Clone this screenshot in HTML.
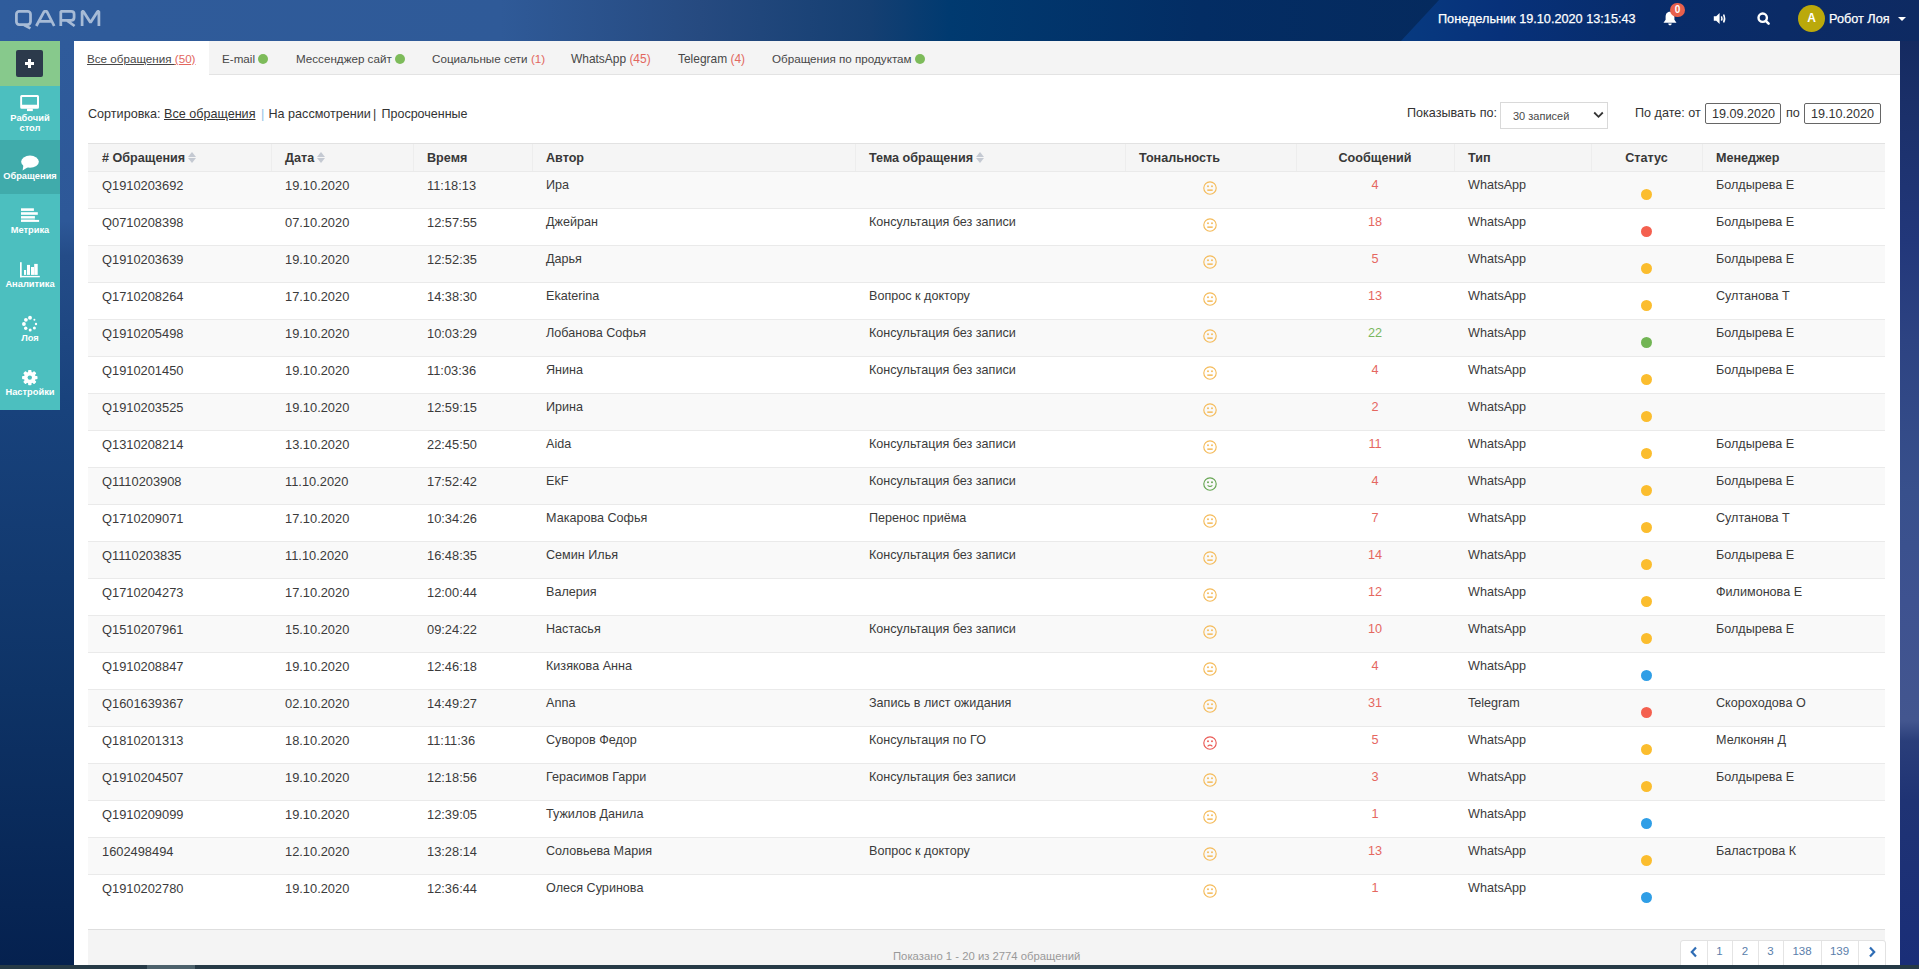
<!DOCTYPE html>
<html><head><meta charset="utf-8">
<style>
*{margin:0;padding:0;box-sizing:border-box}
html,body{width:1919px;height:969px;overflow:hidden}
body{position:relative;font-family:"Liberation Sans",sans-serif;color:#333;background:#0c2f66}
.hbg{position:absolute;left:0;top:0;width:1919px;height:41px;background:linear-gradient(90deg,#2f5c9c 0px,#2f5b9a 100px,#2f5a98 500px,#264a80 700px,#153f72 870px,#003a70 950px,#032d64 1200px,#052a5e 1440px,#072e6c 1600px,#0b2c66 1700px,#10295e 1919px)}
.hbg2{position:absolute;left:0;top:0;width:1919px;height:41px;clip-path:polygon(1401px 41px,1439px 0px,1919px 0px,1919px 41px);background:linear-gradient(90deg,#073a80 1400px,#07317a 1500px,#082c6a 1650px,#0e2a62 1919px)}
.lbg{position:absolute;left:0;top:41px;width:74px;height:924px;background:linear-gradient(180deg,#2f5b9b 0px,#2d5898 180px,#244c88 215px,#18427c 370px,#0e3366 650px,#05214f 924px)}
.rbg{position:absolute;left:1900px;top:41px;width:19px;height:924px;background:linear-gradient(180deg,#142a60 0px,#1a2f68 60px,#22377a 200px,#2d4382 300px,#38508c 450px,#3e5290 560px,#43568f 680px,#2a3e7a 700px,#1f3374 760px,#1a2e78 924px)}
.abs{position:absolute}
/* header */
.logo{position:absolute;left:15px;top:6px;font-size:22px;letter-spacing:5.2px;color:#a9bdd9;font-weight:400}
.hdate{position:absolute;left:1438px;top:12px;font-size:12.7px;color:#fff;white-space:nowrap;-webkit-text-stroke:0.25px #fff}
.hname{position:absolute;left:1829px;top:12px;font-size:12.7px;color:#fff;white-space:nowrap;-webkit-text-stroke:0.25px #fff}
.avatar{position:absolute;left:1798px;top:5px;width:27px;height:27px;border-radius:50%;background:#bba90b;color:#fff;font-size:12px;font-weight:700;text-align:center;line-height:27px}
.badge{position:absolute;left:1670px;top:3px;width:15px;height:14px;border-radius:7px;background:#e8604c;color:#fff;font-size:10px;font-weight:700;text-align:center;line-height:14px}
.caret{position:absolute;left:1898px;top:17px;width:0;height:0;border-left:4px solid transparent;border-right:4px solid transparent;border-top:4px solid #fff}
/* sidebar */
.side{position:absolute;left:0;top:41px;width:60px}
.sgreen{height:45px;background:#87c98c;position:relative}
.plus{position:absolute;left:16px;top:9px;width:27px;height:27px;background:#2c3a4b;border-radius:2px}
.plus:before{content:"";position:absolute;left:9px;top:12px;width:9px;height:3px;background:#fff}
.plus:after{content:"";position:absolute;left:12px;top:9px;width:3px;height:9px;background:#fff}
.si{height:54px;background:#4cbfbf;position:relative;color:#fff;text-align:center;font-weight:700;font-size:9.3px;letter-spacing:0;line-height:10px}
.si.act{background:#40abab}
.si svg{position:absolute;left:0;top:0}
.si .lab{position:absolute;left:0;width:60px;text-align:center}
/* panel */
.panel{position:absolute;left:74px;top:41px;width:1826px;height:924px;background:#fff}
.tabs{position:absolute;left:0;top:0;width:1826px;height:34px;background:#f4f4f4;border-bottom:1px solid #e3e3e3}
.tab{position:absolute;top:11px;font-size:11.65px;color:#474747;white-space:nowrap}
.tab.act{left:0;top:0;width:135px;height:34px;background:#fff}
.cnt{color:#e2675e}
.gd{display:inline-block;width:10px;height:10px;border-radius:50%;background:#7dbb5a;margin-left:3px;vertical-align:-1px}
.sortl{position:absolute;top:66px;font-size:12.6px;white-space:nowrap;color:#333}
.sortl u{text-decoration:underline}
.flt{position:absolute;top:65px;font-size:12.6px;white-space:nowrap;color:#333}
.sel{position:absolute;left:1426px;top:61px;width:108px;height:27px;border:1px solid #d9d9d9;border-radius:0;background:#fff}
.sel span{position:absolute;left:12px;top:7px;font-size:11px;color:#4a4a4a}
.dbox{position:absolute;top:62px;height:21px;border:1px solid #666;border-radius:2px;background:#fff;font-size:12.6px;color:#333;padding:3px 0 0 6px;white-space:nowrap}
/* table */
.tbl{position:absolute;left:14px;top:102px;width:1797px}
.thead{position:absolute;left:0;top:0;width:1797px;height:29px;background:#f5f5f5;border-top:1px solid #e2e2e2;border-bottom:1px solid #e2e2e2}
.h{position:absolute;top:7px;font-weight:700;font-size:12.6px;color:#383838;white-space:nowrap}
.vl{position:absolute;top:0;width:1px;height:27px;background:#ededed}
.sort{display:inline-block;position:relative;width:8px;height:11px;margin-left:3px;vertical-align:-1px}
.sort .up{position:absolute;left:0;top:0;border-left:4px solid transparent;border-right:4px solid transparent;border-bottom:5px solid #c4c9d2}
.sort .dn{position:absolute;left:0;top:6px;border-left:4px solid transparent;border-right:4px solid transparent;border-top:5px solid #c4c9d2}
.row{position:absolute;left:0;width:1797px;border-top:1px solid #eaeaea}
.c{position:absolute;top:6px;font-size:12.6px;color:#3b3b3b;white-space:nowrap}
.num{position:absolute;top:6px;width:80px;text-align:center;font-size:12.7px}
.face{position:absolute;top:9px;width:14px;height:14px}
.dot{position:absolute;top:17px;width:11px;height:11px;border-radius:50%}
.foot{position:absolute;left:14px;top:888px;width:1797px;height:36px;background:#f4f4f4;border-top:1px solid #dedede}
.ftxt{position:absolute;left:805px;top:20px;font-size:11.3px;color:#999;white-space:nowrap}
.pag{position:absolute;left:1591.5px;top:10px;height:26px;background:#fff;border:1px solid #e2e2e2;border-radius:3px 3px 0 0;display:flex}
.pag div{height:26px;border-left:1px solid #e4e4e4;text-align:center;font-size:11.5px;color:#5a7eab;line-height:21px}
.pag div:first-child{border-left:none}
.strip{position:absolute;left:0;top:965px;width:1919px;height:4px;background:#263a46}
.thumb{position:absolute;left:147px;top:965px;width:48px;height:4px;background:#4c616b}
</style></head><body>
<div class="hbg"></div><div class="hbg2"></div><div class="lbg"></div><div class="rbg"></div>
<svg class="abs" style="left:0;top:0" width="110" height="41" viewBox="0 0 110 41"><g fill="none" stroke="#a7bbd6" stroke-width="2.75" stroke-linejoin="bevel">
<rect x="16.4" y="11.4" width="14.1" height="13.2" rx="2.8"/><path d="M24.2 25.0 L30.4 28.4"/>
<path d="M36.3 26 L44.2 11.3 L46.8 11.3 L54.2 26 M39.2 21.4 L51.2 21.4"/>
<path d="M60.8 26 L60.8 11.4 L71.2 11.4 Q74.1 11.4 74.1 14.2 L74.1 17.6 Q74.1 20.4 71.2 20.4 L60.8 20.4 M67.2 20.6 L74.6 26"/>
<path d="M82.1 26 L82.1 11.4 L83.4 11.4 L90.5 22.6 L97.6 11.4 L98.9 11.4 L98.9 26"/>
</g></svg>
<div class="hdate">Понедельник 19.10.2020 13:15:43</div>
<!-- bell -->
<svg class="abs" style="left:1662px;top:11px" width="16" height="15" viewBox="0 0 16 15"><path d="M8 0.8 C4.8 0.8 3.6 3.2 3.6 6 L3.6 8.8 L1.5 11.8 L14.5 11.8 L12.4 8.8 L12.4 6 C12.4 3.2 11.2 0.8 8 0.8 Z M6.2 12.6 A1.8 1.8 0 0 0 9.8 12.6 Z" fill="#fff"/></svg>
<div class="badge">0</div>
<!-- speaker -->
<svg class="abs" style="left:1713px;top:12px" width="14" height="13" viewBox="0 0 14 13"><path d="M0.8 4.2 L3.2 4.2 L6.6 1 L6.6 12 L3.2 8.8 L0.8 8.8 Z" fill="#fff"/><path d="M8.4 4.3 Q9.5 6.5 8.4 8.7" fill="none" stroke="#fff" stroke-width="1.5"/><path d="M10.6 2.5 Q12.6 6.5 10.6 10.5" fill="none" stroke="#fff" stroke-width="1.5"/></svg>
<!-- search -->
<svg class="abs" style="left:1757px;top:12px" width="14" height="14" viewBox="0 0 14 14"><circle cx="5.7" cy="5.7" r="4.2" fill="none" stroke="#fff" stroke-width="2.4"/><path d="M8.8 8.8 L11.6 11.6" stroke="#fff" stroke-width="2.6" stroke-linecap="round"/></svg>
<div class="avatar">A</div>
<div class="hname">Робот Лоя</div>
<div class="caret"></div>

<div class="side">
 <div class="sgreen"><div class="plus"></div></div>
 <div class="si">
  <svg width="60" height="54" viewBox="0 0 60 54"><path fill="#fff" fill-rule="evenodd" d="M21.7 9 L37.5 9 Q39 9 39 10.5 L39 21.3 Q39 22.8 37.5 22.8 L21.7 22.8 Q20.2 22.8 20.2 21.3 L20.2 10.5 Q20.2 9 21.7 9 Z M22.1 11 L22.1 18.7 L37 18.7 L37 11 Z"/><rect x="27" y="22.6" width="5.8" height="2.5" fill="#fff"/></svg>
  <div class="lab" style="top:28px;line-height:9.5px">Рабочий<br>стол</div>
 </div>
 <div class="si act">
  <svg width="60" height="54" viewBox="0 0 60 54"><ellipse cx="30" cy="21.7" rx="8.85" ry="6.1" fill="#fff"/><path d="M23.5 24.5 L22.6 30.5 L28.5 26.8 Z" fill="#fff"/></svg>
  <div class="lab" style="top:31px">Обращения</div>
 </div>
 <div class="si">
  <svg width="60" height="54" viewBox="0 0 60 54"><g fill="#fff"><rect x="21" y="14.3" width="12.9" height="2.6"/><rect x="21" y="18.2" width="16.8" height="2.6"/><rect x="21" y="22.1" width="13.9" height="2.1"/><rect x="21" y="24.2" width="13.9" height="1.5" opacity="0.55"/><rect x="21" y="25.9" width="18.1" height="2"/></g></svg>
  <div class="lab" style="top:31px">Метрика</div>
 </div>
 <div class="si">
  <svg width="60" height="54" viewBox="0 0 60 54"><g fill="#fff"><rect x="20" y="14.2" width="1.7" height="15.1"/><rect x="20" y="27.9" width="19.8" height="1.4"/><rect x="24" y="22" width="2.1" height="4.9"/><rect x="27" y="16.9" width="3" height="10"/><rect x="31" y="19" width="3" height="7.9"/><rect x="34.2" y="15.9" width="3.5" height="11"/></g></svg>
  <div class="lab" style="top:31px">Аналитика</div>
 </div>
 <div class="si">
  <svg width="60" height="54" viewBox="0 0 60 54"><g fill="#fff"><circle cx="30" cy="15.8" r="1.95"/><circle cx="25.9" cy="17.8" r="1.9"/><circle cx="23.9" cy="22" r="1.9"/><circle cx="25.7" cy="26.2" r="1.7"/><circle cx="30.2" cy="28" r="1.5"/><circle cx="34.4" cy="26" r="1.5"/><circle cx="36" cy="22" r="1.2"/><circle cx="34.4" cy="17.8" r="1.0"/></g></svg>
  <div class="lab" style="top:31px">Лоя</div>
 </div>
 <div class="si">
  <svg width="60" height="54" viewBox="0 0 60 54"><g transform="translate(29.8 21.6)" fill="#fff"><circle r="5.9"/><rect x="-1.7" y="-7.7" width="3.4" height="15.4" rx="0.8"/><rect x="-1.7" y="-7.7" width="3.4" height="15.4" rx="0.8" transform="rotate(45)"/><rect x="-1.7" y="-7.7" width="3.4" height="15.4" rx="0.8" transform="rotate(90)"/><rect x="-1.7" y="-7.7" width="3.4" height="15.4" rx="0.8" transform="rotate(135)"/><circle r="2.2" fill="#4cbfbf"/></g></svg>
  <div class="lab" style="top:31px">Настройки</div>
 </div>
</div>

<div class="panel">
 <div class="tabs">
  <div class="tab act"><span style="position:absolute;left:13px;top:11px"><u>Все обращения </u><span class="cnt"><u>(50)</u></span></span></div>
  <div class="tab" style="left:148px">E-mail<span class="gd"></span></div>
  <div class="tab" style="left:222px">Мессенджер сайт<span class="gd"></span></div>
  <div class="tab" style="left:358px">Социальные сети <span class="cnt">(1)</span></div>
  <div class="tab" style="left:497px;font-size:11.95px">WhatsApp <span class="cnt">(45)</span></div>
  <div class="tab" style="left:604px;font-size:11.95px">Telegram <span class="cnt">(4)</span></div>
  <div class="tab" style="left:698px">Обращения по продуктам<span class="gd"></span></div>
 </div>
 <div class="sortl" style="left:14px">Сортировка:</div>
 <div class="sortl" style="left:90px"><u>Все обращения</u></div>
 <div class="sortl" style="left:187px;color:#8fc1e3">|</div>
 <div class="sortl" style="left:194.5px">На рассмотрении</div>
 <div class="sortl" style="left:299px">|</div>
 <div class="sortl" style="left:307.5px;font-size:12.5px">Просроченные</div>
 <div class="flt" style="left:1333px">Показывать по:</div>
 <div class="sel"><span>30 записей</span><svg style="position:absolute;left:92px;top:8px" width="11" height="8" viewBox="0 0 11 8"><path d="M1.2 1.5 L5.5 5.8 L9.8 1.5" fill="none" stroke="#333" stroke-width="1.8"/></svg></div>
 <div class="flt" style="left:1561px">По дате: от</div>
 <div class="dbox" style="left:1631px;width:76px">19.09.2020</div>
 <div class="flt" style="left:1712px">по</div>
 <div class="dbox" style="left:1730px;width:77px">19.10.2020</div>

 <div class="tbl">
  <div class="thead"><div class="h" style="left:14px"># Обращения<span class="sort"><i class="up"></i><i class="dn"></i></span></div><div class="h" style="left:197px">Дата<span class="sort"><i class="up"></i><i class="dn"></i></span></div><div class="h" style="left:339px">Время</div><div class="h" style="left:458px">Автор</div><div class="h" style="left:781px">Тема обращения<span class="sort"><i class="up"></i><i class="dn"></i></span></div><div class="h" style="left:1051px">Тональность</div><div class="h" style="left:1208px;width:158px;text-align:center">Сообщений</div><div class="h" style="left:1380px">Тип</div><div class="h" style="left:1503px;width:111px;text-align:center">Статус</div><div class="h" style="left:1628px">Менеджер</div><div class="vl" style="left:183px"></div><div class="vl" style="left:325px"></div><div class="vl" style="left:444px"></div><div class="vl" style="left:767px"></div><div class="vl" style="left:1037px"></div><div class="vl" style="left:1208px"></div><div class="vl" style="left:1366px"></div><div class="vl" style="left:1503px"></div><div class="vl" style="left:1614px"></div></div>
  <div class="row" style="top:28px;height:37px;background:#f9f9f9"><div class="c" style="left:14px;font-size:12.85px">Q1910203692</div><div class="c" style="left:197px;font-size:12.85px">19.10.2020</div><div class="c" style="left:339px;font-size:12.85px">11:18:13</div><div class="c" style="left:458px;">Ира</div><div class="face" style="left:1114.9px"><svg width="14" height="14" viewBox="0 0 14 14"><circle cx="7" cy="7" r="6.2" fill="none" stroke="#f4bb5a" stroke-width="1.15"/><circle cx="5.0" cy="5.2" r="0.95" fill="#f4bb5a"/><circle cx="9.0" cy="5.2" r="0.95" fill="#f4bb5a"/><rect x="4.3" y="8.4" width="5.4" height="1.5" fill="#f4bb5a"/></svg></div><div class="num" style="left:1247.0px;color:#e5675f">4</div><div class="c" style="left:1380px;">WhatsApp</div><div class="dot" style="left:1553.0px;background:#fbbd2e"></div><div class="c" style="left:1628px;">Болдырева Е</div></div>
<div class="row" style="top:65px;height:37px;background:#fff"><div class="c" style="left:14px;font-size:12.85px">Q0710208398</div><div class="c" style="left:197px;font-size:12.85px">07.10.2020</div><div class="c" style="left:339px;font-size:12.85px">12:57:55</div><div class="c" style="left:458px;">Джейран</div><div class="c" style="left:781px;">Консультация без записи</div><div class="face" style="left:1114.9px"><svg width="14" height="14" viewBox="0 0 14 14"><circle cx="7" cy="7" r="6.2" fill="none" stroke="#f4bb5a" stroke-width="1.15"/><circle cx="5.0" cy="5.2" r="0.95" fill="#f4bb5a"/><circle cx="9.0" cy="5.2" r="0.95" fill="#f4bb5a"/><rect x="4.3" y="8.4" width="5.4" height="1.5" fill="#f4bb5a"/></svg></div><div class="num" style="left:1247.0px;color:#e5675f">18</div><div class="c" style="left:1380px;">WhatsApp</div><div class="dot" style="left:1553.0px;background:#f4604f"></div><div class="c" style="left:1628px;">Болдырева Е</div></div>
<div class="row" style="top:102px;height:37px;background:#f9f9f9"><div class="c" style="left:14px;font-size:12.85px">Q1910203639</div><div class="c" style="left:197px;font-size:12.85px">19.10.2020</div><div class="c" style="left:339px;font-size:12.85px">12:52:35</div><div class="c" style="left:458px;">Дарья</div><div class="face" style="left:1114.9px"><svg width="14" height="14" viewBox="0 0 14 14"><circle cx="7" cy="7" r="6.2" fill="none" stroke="#f4bb5a" stroke-width="1.15"/><circle cx="5.0" cy="5.2" r="0.95" fill="#f4bb5a"/><circle cx="9.0" cy="5.2" r="0.95" fill="#f4bb5a"/><rect x="4.3" y="8.4" width="5.4" height="1.5" fill="#f4bb5a"/></svg></div><div class="num" style="left:1247.0px;color:#e5675f">5</div><div class="c" style="left:1380px;">WhatsApp</div><div class="dot" style="left:1553.0px;background:#fbbd2e"></div><div class="c" style="left:1628px;">Болдырева Е</div></div>
<div class="row" style="top:139px;height:37px;background:#fff"><div class="c" style="left:14px;font-size:12.85px">Q1710208264</div><div class="c" style="left:197px;font-size:12.85px">17.10.2020</div><div class="c" style="left:339px;font-size:12.85px">14:38:30</div><div class="c" style="left:458px;">Ekaterina</div><div class="c" style="left:781px;">Вопрос к доктору</div><div class="face" style="left:1114.9px"><svg width="14" height="14" viewBox="0 0 14 14"><circle cx="7" cy="7" r="6.2" fill="none" stroke="#f4bb5a" stroke-width="1.15"/><circle cx="5.0" cy="5.2" r="0.95" fill="#f4bb5a"/><circle cx="9.0" cy="5.2" r="0.95" fill="#f4bb5a"/><rect x="4.3" y="8.4" width="5.4" height="1.5" fill="#f4bb5a"/></svg></div><div class="num" style="left:1247.0px;color:#e5675f">13</div><div class="c" style="left:1380px;">WhatsApp</div><div class="dot" style="left:1553.0px;background:#fbbd2e"></div><div class="c" style="left:1628px;">Султанова Т</div></div>
<div class="row" style="top:176px;height:37px;background:#f9f9f9"><div class="c" style="left:14px;font-size:12.85px">Q1910205498</div><div class="c" style="left:197px;font-size:12.85px">19.10.2020</div><div class="c" style="left:339px;font-size:12.85px">10:03:29</div><div class="c" style="left:458px;">Лобанова Софья</div><div class="c" style="left:781px;">Консультация без записи</div><div class="face" style="left:1114.9px"><svg width="14" height="14" viewBox="0 0 14 14"><circle cx="7" cy="7" r="6.2" fill="none" stroke="#f4bb5a" stroke-width="1.15"/><circle cx="5.0" cy="5.2" r="0.95" fill="#f4bb5a"/><circle cx="9.0" cy="5.2" r="0.95" fill="#f4bb5a"/><rect x="4.3" y="8.4" width="5.4" height="1.5" fill="#f4bb5a"/></svg></div><div class="num" style="left:1247.0px;color:#7ab760">22</div><div class="c" style="left:1380px;">WhatsApp</div><div class="dot" style="left:1553.0px;background:#72b554"></div><div class="c" style="left:1628px;">Болдырева Е</div></div>
<div class="row" style="top:213px;height:37px;background:#fff"><div class="c" style="left:14px;font-size:12.85px">Q1910201450</div><div class="c" style="left:197px;font-size:12.85px">19.10.2020</div><div class="c" style="left:339px;font-size:12.85px">11:03:36</div><div class="c" style="left:458px;">Янина</div><div class="c" style="left:781px;">Консультация без записи</div><div class="face" style="left:1114.9px"><svg width="14" height="14" viewBox="0 0 14 14"><circle cx="7" cy="7" r="6.2" fill="none" stroke="#f4bb5a" stroke-width="1.15"/><circle cx="5.0" cy="5.2" r="0.95" fill="#f4bb5a"/><circle cx="9.0" cy="5.2" r="0.95" fill="#f4bb5a"/><rect x="4.3" y="8.4" width="5.4" height="1.5" fill="#f4bb5a"/></svg></div><div class="num" style="left:1247.0px;color:#e5675f">4</div><div class="c" style="left:1380px;">WhatsApp</div><div class="dot" style="left:1553.0px;background:#fbbd2e"></div><div class="c" style="left:1628px;">Болдырева Е</div></div>
<div class="row" style="top:250px;height:37px;background:#f9f9f9"><div class="c" style="left:14px;font-size:12.85px">Q1910203525</div><div class="c" style="left:197px;font-size:12.85px">19.10.2020</div><div class="c" style="left:339px;font-size:12.85px">12:59:15</div><div class="c" style="left:458px;">Ирина</div><div class="face" style="left:1114.9px"><svg width="14" height="14" viewBox="0 0 14 14"><circle cx="7" cy="7" r="6.2" fill="none" stroke="#f4bb5a" stroke-width="1.15"/><circle cx="5.0" cy="5.2" r="0.95" fill="#f4bb5a"/><circle cx="9.0" cy="5.2" r="0.95" fill="#f4bb5a"/><rect x="4.3" y="8.4" width="5.4" height="1.5" fill="#f4bb5a"/></svg></div><div class="num" style="left:1247.0px;color:#e5675f">2</div><div class="c" style="left:1380px;">WhatsApp</div><div class="dot" style="left:1553.0px;background:#fbbd2e"></div></div>
<div class="row" style="top:287px;height:37px;background:#fff"><div class="c" style="left:14px;font-size:12.85px">Q1310208214</div><div class="c" style="left:197px;font-size:12.85px">13.10.2020</div><div class="c" style="left:339px;font-size:12.85px">22:45:50</div><div class="c" style="left:458px;">Aida</div><div class="c" style="left:781px;">Консультация без записи</div><div class="face" style="left:1114.9px"><svg width="14" height="14" viewBox="0 0 14 14"><circle cx="7" cy="7" r="6.2" fill="none" stroke="#f4bb5a" stroke-width="1.15"/><circle cx="5.0" cy="5.2" r="0.95" fill="#f4bb5a"/><circle cx="9.0" cy="5.2" r="0.95" fill="#f4bb5a"/><rect x="4.3" y="8.4" width="5.4" height="1.5" fill="#f4bb5a"/></svg></div><div class="num" style="left:1247.0px;color:#e5675f">11</div><div class="c" style="left:1380px;">WhatsApp</div><div class="dot" style="left:1553.0px;background:#fbbd2e"></div><div class="c" style="left:1628px;">Болдырева Е</div></div>
<div class="row" style="top:324px;height:37px;background:#f9f9f9"><div class="c" style="left:14px;font-size:12.85px">Q1110203908</div><div class="c" style="left:197px;font-size:12.85px">11.10.2020</div><div class="c" style="left:339px;font-size:12.85px">17:52:42</div><div class="c" style="left:458px;">EkF</div><div class="c" style="left:781px;">Консультация без записи</div><div class="face" style="left:1114.9px"><svg width="14" height="14" viewBox="0 0 14 14"><circle cx="7" cy="7" r="6.2" fill="none" stroke="#66a552" stroke-width="1.15"/><circle cx="5.0" cy="5.2" r="0.95" fill="#66a552"/><circle cx="9.0" cy="5.2" r="0.95" fill="#66a552"/><path d="M4.6 8.3 Q7 10.6 9.4 8.3" fill="none" stroke="#66a552" stroke-width="1.1"/></svg></div><div class="num" style="left:1247.0px;color:#e5675f">4</div><div class="c" style="left:1380px;">WhatsApp</div><div class="dot" style="left:1553.0px;background:#fbbd2e"></div><div class="c" style="left:1628px;">Болдырева Е</div></div>
<div class="row" style="top:361px;height:37px;background:#fff"><div class="c" style="left:14px;font-size:12.85px">Q1710209071</div><div class="c" style="left:197px;font-size:12.85px">17.10.2020</div><div class="c" style="left:339px;font-size:12.85px">10:34:26</div><div class="c" style="left:458px;">Макарова Софья</div><div class="c" style="left:781px;">Перенос приёма</div><div class="face" style="left:1114.9px"><svg width="14" height="14" viewBox="0 0 14 14"><circle cx="7" cy="7" r="6.2" fill="none" stroke="#f4bb5a" stroke-width="1.15"/><circle cx="5.0" cy="5.2" r="0.95" fill="#f4bb5a"/><circle cx="9.0" cy="5.2" r="0.95" fill="#f4bb5a"/><rect x="4.3" y="8.4" width="5.4" height="1.5" fill="#f4bb5a"/></svg></div><div class="num" style="left:1247.0px;color:#e5675f">7</div><div class="c" style="left:1380px;">WhatsApp</div><div class="dot" style="left:1553.0px;background:#fbbd2e"></div><div class="c" style="left:1628px;">Султанова Т</div></div>
<div class="row" style="top:398px;height:37px;background:#f9f9f9"><div class="c" style="left:14px;font-size:12.85px">Q1110203835</div><div class="c" style="left:197px;font-size:12.85px">11.10.2020</div><div class="c" style="left:339px;font-size:12.85px">16:48:35</div><div class="c" style="left:458px;">Семин Илья</div><div class="c" style="left:781px;">Консультация без записи</div><div class="face" style="left:1114.9px"><svg width="14" height="14" viewBox="0 0 14 14"><circle cx="7" cy="7" r="6.2" fill="none" stroke="#f4bb5a" stroke-width="1.15"/><circle cx="5.0" cy="5.2" r="0.95" fill="#f4bb5a"/><circle cx="9.0" cy="5.2" r="0.95" fill="#f4bb5a"/><rect x="4.3" y="8.4" width="5.4" height="1.5" fill="#f4bb5a"/></svg></div><div class="num" style="left:1247.0px;color:#e5675f">14</div><div class="c" style="left:1380px;">WhatsApp</div><div class="dot" style="left:1553.0px;background:#fbbd2e"></div><div class="c" style="left:1628px;">Болдырева Е</div></div>
<div class="row" style="top:435px;height:37px;background:#fff"><div class="c" style="left:14px;font-size:12.85px">Q1710204273</div><div class="c" style="left:197px;font-size:12.85px">17.10.2020</div><div class="c" style="left:339px;font-size:12.85px">12:00:44</div><div class="c" style="left:458px;">Валерия</div><div class="face" style="left:1114.9px"><svg width="14" height="14" viewBox="0 0 14 14"><circle cx="7" cy="7" r="6.2" fill="none" stroke="#f4bb5a" stroke-width="1.15"/><circle cx="5.0" cy="5.2" r="0.95" fill="#f4bb5a"/><circle cx="9.0" cy="5.2" r="0.95" fill="#f4bb5a"/><rect x="4.3" y="8.4" width="5.4" height="1.5" fill="#f4bb5a"/></svg></div><div class="num" style="left:1247.0px;color:#e5675f">12</div><div class="c" style="left:1380px;">WhatsApp</div><div class="dot" style="left:1553.0px;background:#fbbd2e"></div><div class="c" style="left:1628px;">Филимонова Е</div></div>
<div class="row" style="top:472px;height:37px;background:#f9f9f9"><div class="c" style="left:14px;font-size:12.85px">Q1510207961</div><div class="c" style="left:197px;font-size:12.85px">15.10.2020</div><div class="c" style="left:339px;font-size:12.85px">09:24:22</div><div class="c" style="left:458px;">Настасья</div><div class="c" style="left:781px;">Консультация без записи</div><div class="face" style="left:1114.9px"><svg width="14" height="14" viewBox="0 0 14 14"><circle cx="7" cy="7" r="6.2" fill="none" stroke="#f4bb5a" stroke-width="1.15"/><circle cx="5.0" cy="5.2" r="0.95" fill="#f4bb5a"/><circle cx="9.0" cy="5.2" r="0.95" fill="#f4bb5a"/><rect x="4.3" y="8.4" width="5.4" height="1.5" fill="#f4bb5a"/></svg></div><div class="num" style="left:1247.0px;color:#e5675f">10</div><div class="c" style="left:1380px;">WhatsApp</div><div class="dot" style="left:1553.0px;background:#fbbd2e"></div><div class="c" style="left:1628px;">Болдырева Е</div></div>
<div class="row" style="top:509px;height:37px;background:#fff"><div class="c" style="left:14px;font-size:12.85px">Q1910208847</div><div class="c" style="left:197px;font-size:12.85px">19.10.2020</div><div class="c" style="left:339px;font-size:12.85px">12:46:18</div><div class="c" style="left:458px;">Кизякова Анна</div><div class="face" style="left:1114.9px"><svg width="14" height="14" viewBox="0 0 14 14"><circle cx="7" cy="7" r="6.2" fill="none" stroke="#f4bb5a" stroke-width="1.15"/><circle cx="5.0" cy="5.2" r="0.95" fill="#f4bb5a"/><circle cx="9.0" cy="5.2" r="0.95" fill="#f4bb5a"/><rect x="4.3" y="8.4" width="5.4" height="1.5" fill="#f4bb5a"/></svg></div><div class="num" style="left:1247.0px;color:#e5675f">4</div><div class="c" style="left:1380px;">WhatsApp</div><div class="dot" style="left:1553.0px;background:#2f9ee6"></div></div>
<div class="row" style="top:546px;height:37px;background:#f9f9f9"><div class="c" style="left:14px;font-size:12.85px">Q1601639367</div><div class="c" style="left:197px;font-size:12.85px">02.10.2020</div><div class="c" style="left:339px;font-size:12.85px">14:49:27</div><div class="c" style="left:458px;">Anna</div><div class="c" style="left:781px;">Запись в лист ожидания</div><div class="face" style="left:1114.9px"><svg width="14" height="14" viewBox="0 0 14 14"><circle cx="7" cy="7" r="6.2" fill="none" stroke="#f4bb5a" stroke-width="1.15"/><circle cx="5.0" cy="5.2" r="0.95" fill="#f4bb5a"/><circle cx="9.0" cy="5.2" r="0.95" fill="#f4bb5a"/><rect x="4.3" y="8.4" width="5.4" height="1.5" fill="#f4bb5a"/></svg></div><div class="num" style="left:1247.0px;color:#e5675f">31</div><div class="c" style="left:1380px;">Telegram</div><div class="dot" style="left:1553.0px;background:#f4604f"></div><div class="c" style="left:1628px;">Скороходова О</div></div>
<div class="row" style="top:583px;height:37px;background:#fff"><div class="c" style="left:14px;font-size:12.85px">Q1810201313</div><div class="c" style="left:197px;font-size:12.85px">18.10.2020</div><div class="c" style="left:339px;font-size:12.85px">11:11:36</div><div class="c" style="left:458px;">Суворов Федор</div><div class="c" style="left:781px;">Консультация по ГО</div><div class="face" style="left:1114.9px"><svg width="14" height="14" viewBox="0 0 14 14"><circle cx="7" cy="7" r="6.2" fill="none" stroke="#ea5a55" stroke-width="1.15"/><circle cx="5.0" cy="5.2" r="0.95" fill="#ea5a55"/><circle cx="9.0" cy="5.2" r="0.95" fill="#ea5a55"/><path d="M4.6 10.4 Q7 8.0 9.4 10.4" fill="none" stroke="#ea5a55" stroke-width="1.1"/></svg></div><div class="num" style="left:1247.0px;color:#e5675f">5</div><div class="c" style="left:1380px;">WhatsApp</div><div class="dot" style="left:1553.0px;background:#fbbd2e"></div><div class="c" style="left:1628px;">Мелконян Д</div></div>
<div class="row" style="top:620px;height:37px;background:#f9f9f9"><div class="c" style="left:14px;font-size:12.85px">Q1910204507</div><div class="c" style="left:197px;font-size:12.85px">19.10.2020</div><div class="c" style="left:339px;font-size:12.85px">12:18:56</div><div class="c" style="left:458px;">Герасимов Гарри</div><div class="c" style="left:781px;">Консультация без записи</div><div class="face" style="left:1114.9px"><svg width="14" height="14" viewBox="0 0 14 14"><circle cx="7" cy="7" r="6.2" fill="none" stroke="#f4bb5a" stroke-width="1.15"/><circle cx="5.0" cy="5.2" r="0.95" fill="#f4bb5a"/><circle cx="9.0" cy="5.2" r="0.95" fill="#f4bb5a"/><rect x="4.3" y="8.4" width="5.4" height="1.5" fill="#f4bb5a"/></svg></div><div class="num" style="left:1247.0px;color:#e5675f">3</div><div class="c" style="left:1380px;">WhatsApp</div><div class="dot" style="left:1553.0px;background:#fbbd2e"></div><div class="c" style="left:1628px;">Болдырева Е</div></div>
<div class="row" style="top:657px;height:37px;background:#fff"><div class="c" style="left:14px;font-size:12.85px">Q1910209099</div><div class="c" style="left:197px;font-size:12.85px">19.10.2020</div><div class="c" style="left:339px;font-size:12.85px">12:39:05</div><div class="c" style="left:458px;">Тужилов Данила</div><div class="face" style="left:1114.9px"><svg width="14" height="14" viewBox="0 0 14 14"><circle cx="7" cy="7" r="6.2" fill="none" stroke="#f4bb5a" stroke-width="1.15"/><circle cx="5.0" cy="5.2" r="0.95" fill="#f4bb5a"/><circle cx="9.0" cy="5.2" r="0.95" fill="#f4bb5a"/><rect x="4.3" y="8.4" width="5.4" height="1.5" fill="#f4bb5a"/></svg></div><div class="num" style="left:1247.0px;color:#e5675f">1</div><div class="c" style="left:1380px;">WhatsApp</div><div class="dot" style="left:1553.0px;background:#2f9ee6"></div></div>
<div class="row" style="top:694px;height:37px;background:#f9f9f9"><div class="c" style="left:14px;font-size:12.85px">1602498494</div><div class="c" style="left:197px;font-size:12.85px">12.10.2020</div><div class="c" style="left:339px;font-size:12.85px">13:28:14</div><div class="c" style="left:458px;">Соловьева Мария</div><div class="c" style="left:781px;">Вопрос к доктору</div><div class="face" style="left:1114.9px"><svg width="14" height="14" viewBox="0 0 14 14"><circle cx="7" cy="7" r="6.2" fill="none" stroke="#f4bb5a" stroke-width="1.15"/><circle cx="5.0" cy="5.2" r="0.95" fill="#f4bb5a"/><circle cx="9.0" cy="5.2" r="0.95" fill="#f4bb5a"/><rect x="4.3" y="8.4" width="5.4" height="1.5" fill="#f4bb5a"/></svg></div><div class="num" style="left:1247.0px;color:#e5675f">13</div><div class="c" style="left:1380px;">WhatsApp</div><div class="dot" style="left:1553.0px;background:#fbbd2e"></div><div class="c" style="left:1628px;">Баластрова К</div></div>
<div class="row" style="top:731px;height:58px;background:#fff"><div class="c" style="left:14px;font-size:12.85px">Q1910202780</div><div class="c" style="left:197px;font-size:12.85px">19.10.2020</div><div class="c" style="left:339px;font-size:12.85px">12:36:44</div><div class="c" style="left:458px;">Олеся Суринова</div><div class="face" style="left:1114.9px"><svg width="14" height="14" viewBox="0 0 14 14"><circle cx="7" cy="7" r="6.2" fill="none" stroke="#f4bb5a" stroke-width="1.15"/><circle cx="5.0" cy="5.2" r="0.95" fill="#f4bb5a"/><circle cx="9.0" cy="5.2" r="0.95" fill="#f4bb5a"/><rect x="4.3" y="8.4" width="5.4" height="1.5" fill="#f4bb5a"/></svg></div><div class="num" style="left:1247.0px;color:#e5675f">1</div><div class="c" style="left:1380px;">WhatsApp</div><div class="dot" style="left:1553.0px;background:#2f9ee6"></div></div>
 </div>
 <div class="foot">
  <div class="ftxt">Показано 1 - 20 из 2774 обращений</div>
  <div class="pag">
   <div style="width:26px"><svg width="10" height="12" viewBox="0 0 10 12" style="margin-top:5px"><path d="M7 1.5 L2.8 6 L7 10.5" fill="none" stroke="#2f6db5" stroke-width="2.2"/></svg></div>
   <div style="width:25px">1</div>
   <div style="width:26px">2</div>
   <div style="width:25px">3</div>
   <div style="width:38px">138</div>
   <div style="width:37px">139</div>
   <div style="width:27px"><svg width="10" height="12" viewBox="0 0 10 12" style="margin-top:5px"><path d="M3 1.5 L7.2 6 L3 10.5" fill="none" stroke="#2f6db5" stroke-width="2.2"/></svg></div>
  </div>
 </div>
</div>
<div class="strip"></div><div class="thumb"></div>
</body></html>
